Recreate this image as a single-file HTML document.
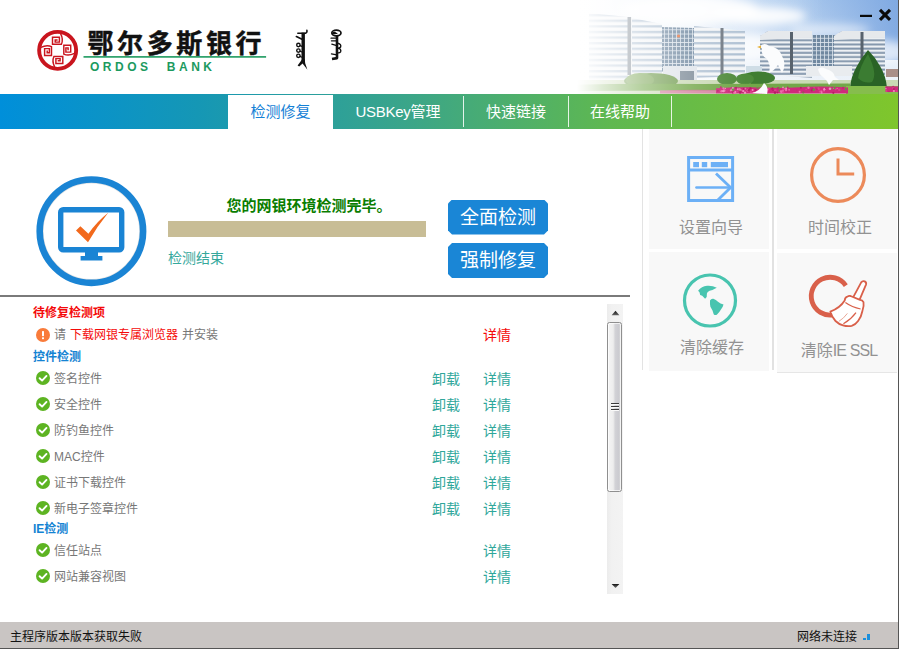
<!DOCTYPE html>
<html lang="zh-CN">
<head>
<meta charset="utf-8">
<title>鄂尔多斯银行网银助手</title>
<style>
*{box-sizing:border-box;margin:0;padding:0}
html,body{width:900px;height:650px;overflow:hidden;background:#fff}
body{font-family:"Liberation Sans","Noto Sans CJK SC",sans-serif;position:relative;color:#333}
.abs{position:absolute}
#win{position:absolute;left:0;top:0;width:899px;height:649px;background:#fff;border-right:1px solid #555;border-bottom:1px solid #555;overflow:hidden}
/* header */
#header{position:absolute;left:0;top:0;width:898px;height:94px;background:#fff;overflow:hidden}
#photo{position:absolute;left:560px;top:0;width:338px;height:94px}
#logo{position:absolute;left:30px;top:20px;width:340px;height:60px}
.ordos{position:absolute;left:90px;top:59px;font-size:12px;font-weight:bold;color:#1c9a5f;letter-spacing:3.5px;word-spacing:8.5px;white-space:pre;line-height:16px}
#winbtns{position:absolute;left:856px;top:6px;width:40px;height:20px}
/* nav */
#nav{position:absolute;left:0;top:94px;width:898px;height:35px;background:linear-gradient(90deg,#008fda 0%,#1597b5 22%,#3aa58a 45%,#5fb850 68%,#7fc62c 100%)}
.tab{position:absolute;top:1px;height:34px;line-height:33px;text-align:center;color:#fff;font-size:15px;white-space:nowrap}
.tab.active{background:#fff;color:#1481d6}
.sep{position:absolute;top:2px;width:1px;height:31px;background:rgba(255,255,255,.85)}
/* detect area */
#msg{position:absolute;left:168px;top:197px;width:282px;text-align:center;font-size:15px;font-weight:bold;color:#0a7d00;line-height:18px;white-space:nowrap}
#bar{position:absolute;left:168px;top:221px;width:258px;height:16px;background:#c8bd96}
#end{position:absolute;left:168px;top:249px;font-size:14px;color:#35a89c;line-height:18px}
.bigbtn{position:absolute;left:448px;width:100px;height:35px;background:#1a86d6;color:#fff;font-size:19px;line-height:34px;padding-top:1px;text-align:center;white-space:nowrap;clip-path:polygon(4px 0,96px 0,100px 4px,100px 31px,96px 35px,4px 35px,0 31px,0 4px)}
#hr{position:absolute;left:0;top:295px;width:630px;height:2px;background:#7a7a7a}
/* list */
#list{position:absolute;left:33px;top:304px;width:570px;height:292px;font-size:12px;line-height:18px}
.row{position:absolute;left:0;width:570px;height:18px;white-space:nowrap}
.h-red{color:#f40a0a;font-weight:bold}
.h-blue{color:#1483d3;font-weight:bold}
.name{position:absolute;left:21px;top:0;color:#777;word-spacing:.7px}
.ico{position:absolute;left:3px;top:1px;width:14px;height:14px}
.un{position:absolute;left:399px;top:0;color:#2fa79b;font-size:14px}
.dt{position:absolute;left:450px;top:0;color:#2fa79b;font-size:14px}
.red{color:#f40a0a}
/* scrollbar */
#sb{position:absolute;left:607px;top:304px;width:16px;height:290px;background:linear-gradient(90deg,#ececec 0%,#f1f1f1 30%,#f3f3f3 100%)}
#thumb{position:absolute;left:0;top:18px;width:15px;height:170px;border:1px solid #8f8f8f;border-radius:2.5px;background:linear-gradient(90deg,#f5f5f5 0%,#ededed 40%,#d2d2d6 55%,#cbcbd0 80%,#dadada 100%);box-shadow:inset 0 0 0 1px rgba(255,255,255,.7)}
#thumb i{position:absolute;left:3px;width:8px;height:2px;background:linear-gradient(180deg,#3a3a3a 0,#3a3a3a 50%,#fafafa 50%,#fafafa 100%)}
/* tiles */
#tiles{position:absolute;left:0;top:0;width:898px;height:400px}
.tile{position:absolute;background:#f8f8f8}
.tl{position:absolute;left:0;width:100%;text-align:center;font-size:16px;color:#929292;white-space:nowrap;line-height:20px}
/* status */
#status{position:absolute;left:0;top:622px;width:898px;height:26px;background:#c9c5c3;font-size:12px;color:#111;line-height:26px}
</style>
</head>
<body>
<div id="win">
  <div id="header">
    <svg id="photo" viewBox="560 0 338 94" preserveAspectRatio="none">
      <defs>
        <linearGradient id="sky" x1="0" y1="0" x2="0" y2="1">
          <stop offset="0" stop-color="#b4d0f0"/><stop offset="0.45" stop-color="#d3e3f5"/><stop offset="0.8" stop-color="#eaf1f9"/><stop offset="1" stop-color="#f2f5f8"/>
        </linearGradient>
        <linearGradient id="skyR" x1="0" y1="0" x2="1" y2="0">
          <stop offset="0" stop-color="#7fa8e2" stop-opacity="0"/><stop offset="0.7" stop-color="#7aa5e0" stop-opacity="0.18"/><stop offset="1" stop-color="#7aa5e0" stop-opacity="0.9"/>
        </linearGradient>
        <linearGradient id="skyL" x1="0" y1="0" x2="1" y2="0"><stop offset="0" stop-color="#fff" stop-opacity="1"/><stop offset="0.4" stop-color="#fff" stop-opacity="0.75"/><stop offset="0.62" stop-color="#fff" stop-opacity="0.25"/><stop offset="0.78" stop-color="#fff" stop-opacity="0"/></linearGradient>
        <linearGradient id="fade" x1="0" y1="0" x2="1" y2="0">
          <stop offset="0" stop-color="#fff" stop-opacity="1"/><stop offset="0.05" stop-color="#fff" stop-opacity="1"/><stop offset="0.13" stop-color="#fff" stop-opacity="0.76"/><stop offset="0.25" stop-color="#fff" stop-opacity="0.46"/><stop offset="0.4" stop-color="#fff" stop-opacity="0.18"/><stop offset="0.55" stop-color="#fff" stop-opacity="0"/>
        </linearGradient>
        <pattern id="fl1" x="0" y="0" width="8" height="5.6" patternUnits="userSpaceOnUse">
          <rect width="8" height="5.6" fill="#f3f5f7"/><rect y="2.9" width="8" height="2.2" fill="#adbfd2"/>
        </pattern>
        <pattern id="fl2" x="0" y="33" width="8" height="4.2" patternUnits="userSpaceOnUse">
          <rect width="8" height="4.2" fill="#eef1f4"/><rect y="2.1" width="8" height="1.9" fill="#8094aa"/>
        </pattern>
        <pattern id="gl" x="0" y="0" width="4" height="4.2" patternUnits="userSpaceOnUse">
          <rect width="4" height="4.2" fill="#6f88a0"/><rect x="0" y="0" width="0.8" height="4.2" fill="#dfe6ee"/><rect x="0" y="0" width="4" height="0.8" fill="#dfe6ee"/>
        </pattern>
        <filter id="b1" x="-20%" y="-20%" width="140%" height="140%"><feGaussianBlur stdDeviation="0.5"/></filter>
        <filter id="b3" x="-30%" y="-30%" width="160%" height="160%"><feGaussianBlur stdDeviation="4"/></filter>
        <filter id="b2" x="-30%" y="-30%" width="160%" height="160%"><feGaussianBlur stdDeviation="1.2"/></filter>
      </defs>
      <rect x="560" y="0" width="338" height="94" fill="url(#sky)"/>
      <rect x="560" y="0" width="338" height="60" fill="url(#skyR)"/>
      <rect x="560" y="0" width="338" height="94" fill="url(#skyL)"/>
      <g filter="url(#b3)" fill="#fff">
        <ellipse cx="760" cy="16" rx="46" ry="9" opacity=".9"/>
        <ellipse cx="690" cy="10" rx="70" ry="14" opacity=".9"/>
        <ellipse cx="830" cy="30" rx="40" ry="6" opacity=".55"/>
        <ellipse cx="880" cy="52" rx="30" ry="12" opacity=".7"/>
        <ellipse cx="750" cy="48" rx="30" ry="14" opacity=".8"/>
      </g>
      <!-- building 1 -->
      <g filter="url(#b1)">
        <polygon points="589,13 628,17 628,84 589,84" fill="url(#fl1)"/>
        <polygon points="632,18 662,24 662,78 632,80" fill="url(#fl1)"/>
        <rect x="627.5" y="17" width="3.6" height="58" fill="#7d8791"/>
        <polygon points="662,27 694,28 694,70 662,72" fill="url(#gl)"/>
        <polygon points="694,26 745,31 745,76 694,78" fill="url(#fl1)"/>
        <rect x="720.5" y="28" width="3" height="47" fill="#6f7882"/>
        <rect x="663" y="66" width="34" height="16" fill="#dfe4ea"/>
        <rect x="680" y="71" width="14" height="9" fill="#7c8a97"/>
        <circle cx="678.5" cy="36" r="1.6" fill="#e8703a"/>
        <!-- building 2 -->
        <polygon points="760,36 768,31 812,31 812,78 760,74" fill="url(#fl2)"/>
        <polygon points="760,36 768,31 812,31 812,37 760,40" fill="#e6e9ec"/>
        <rect x="812" y="35" width="28" height="36" fill="url(#gl)"/>
        <polygon points="834,36 842,31 885,31 885,76 834,74" fill="url(#fl2)"/>
        <polygon points="834,36 842,31 885,31 885,37 834,40" fill="#e6e9ec"/>
        <rect x="790" y="32" width="3" height="42" fill="#59636e"/>
        <rect x="860.5" y="32" width="3" height="42" fill="#59636e"/>
        <rect x="806" y="66" width="46" height="10" fill="#e9ecef"/>
        <rect x="746" y="66" width="16" height="9" fill="#cfdde6"/>
        <rect x="886" y="69" width="12" height="8" fill="#a98f88"/>
      </g>
      <!-- ground, hedge, trees, flowers -->
      <g filter="url(#b1)">
        <rect x="560" y="80" width="338" height="14" fill="#c9d9b4"/>
        <ellipse cx="651" cy="81" rx="27" ry="8" fill="#6e9a4c"/>
        <ellipse cx="640" cy="80" rx="14" ry="7" fill="#7ba656"/>
        <ellipse cx="727" cy="79" rx="10" ry="6" fill="#4f8a3b"/>
        <ellipse cx="758" cy="78" rx="17" ry="6.5" fill="#3f7d30"/>
        <ellipse cx="745" cy="79" rx="9" ry="5.5" fill="#4d8a3a"/>
        <path d="M868 50 Q861 58 857 66 Q851 76 850 88 L887 88 Q886 76 880 66 Q875 57 868 50 Z" fill="#2a6425"/>
        <path d="M868 54 Q860 66 858 78 Q864 84 872 82 Q878 74 868 54 Z" fill="#3a7c31"/>
        <path d="M560 85 Q640 83 700 84 L850 83.5 L850 90 L560 91 Z" fill="#73a748"/>
        <rect x="846" y="86" width="52" height="8" fill="#86bd4e"/>
        <path d="M716 88.2 Q740 86.6 760 87.6 T800 87.2 T848 87.4 V93.6 H716 Z" fill="#cf2c7c"/>
        <path d="M885.5 86.4 H898 V92 H885.5 Z" fill="#cf2c7c"/>
        <path d="M660 90.4 Q690 89.4 716 90 V93.6 H660 Z" fill="#d85a96" opacity=".7"/>
        <circle cx="758.7" cy="88.1" r="0.6" fill="#5f9a3e"/><circle cx="824.4" cy="87.7" r="0.6" fill="#c22672"/><circle cx="783.0" cy="87.4" r="0.9" fill="#f08dc0"/><circle cx="747.8" cy="90.4" r="1.2" fill="#ee6aab"/><circle cx="732.3" cy="88.5" r="1.0" fill="#5f9a3e"/><circle cx="724.2" cy="90.6" r="1.3" fill="#ee6aab"/><circle cx="722.1" cy="92.2" r="0.9" fill="#b51f66"/><circle cx="787.4" cy="90.5" r="1.2" fill="#c22672"/><circle cx="739.9" cy="90.6" r="0.7" fill="#5f9a3e"/><circle cx="728.9" cy="91.3" r="0.6" fill="#c22672"/><circle cx="743.2" cy="91.1" r="1.1" fill="#f08dc0"/><circle cx="777.5" cy="92.6" r="0.8" fill="#b51f66"/><circle cx="820.9" cy="91.3" r="0.7" fill="#e0408f"/><circle cx="755.6" cy="90.1" r="1.1" fill="#b51f66"/><circle cx="754.0" cy="92.9" r="1.0" fill="#ee6aab"/><circle cx="737.8" cy="89.2" r="0.9" fill="#f08dc0"/><circle cx="843.0" cy="87.7" r="1.0" fill="#c22672"/><circle cx="831.6" cy="89.0" r="0.8" fill="#5f9a3e"/><circle cx="781.6" cy="91.8" r="1.2" fill="#ee6aab"/><circle cx="840.7" cy="89.9" r="0.6" fill="#5f9a3e"/><circle cx="812.5" cy="89.0" r="1.3" fill="#c22672"/><circle cx="824.5" cy="88.9" r="1.2" fill="#f08dc0"/><circle cx="761.8" cy="92.7" r="0.7" fill="#b51f66"/><circle cx="731.5" cy="87.5" r="0.7" fill="#b51f66"/><circle cx="748.7" cy="89.5" r="0.7" fill="#f08dc0"/><circle cx="775.3" cy="90.4" r="1.2" fill="#e0408f"/><circle cx="830.0" cy="88.8" r="1.3" fill="#f08dc0"/><circle cx="806.1" cy="89.4" r="0.7" fill="#e0408f"/><circle cx="739.3" cy="88.5" r="0.6" fill="#e0408f"/><circle cx="825.7" cy="88.3" r="0.6" fill="#b51f66"/><circle cx="771.3" cy="89.3" r="0.8" fill="#c22672"/><circle cx="732.6" cy="92.2" r="1.1" fill="#c22672"/><circle cx="813.7" cy="89.8" r="1.2" fill="#5f9a3e"/><circle cx="767.8" cy="89.5" r="0.9" fill="#ee6aab"/><circle cx="768.9" cy="88.3" r="0.9" fill="#e0408f"/><circle cx="730.5" cy="90.7" r="0.6" fill="#ee6aab"/><circle cx="736.0" cy="87.8" r="1.0" fill="#b51f66"/><circle cx="725.3" cy="88.4" r="0.7" fill="#f08dc0"/><circle cx="749.3" cy="89.2" r="0.9" fill="#b51f66"/><circle cx="731.2" cy="90.0" r="0.9" fill="#f08dc0"/><circle cx="757.2" cy="88.0" r="0.8" fill="#5f9a3e"/><circle cx="750.9" cy="92.0" r="1.0" fill="#e0408f"/><circle cx="743.1" cy="92.7" r="0.7" fill="#b51f66"/><circle cx="787.7" cy="87.4" r="0.8" fill="#c22672"/><circle cx="800.9" cy="87.7" r="1.0" fill="#b51f66"/><circle cx="835.9" cy="89.3" r="1.0" fill="#e0408f"/><circle cx="818.8" cy="89.1" r="1.0" fill="#e0408f"/><circle cx="820.1" cy="91.6" r="1.2" fill="#e0408f"/><circle cx="824.0" cy="91.5" r="0.7" fill="#e0408f"/><circle cx="781.0" cy="91.4" r="1.2" fill="#ee6aab"/><circle cx="778.3" cy="88.3" r="1.3" fill="#c22672"/><circle cx="775.0" cy="92.6" r="1.3" fill="#b51f66"/><circle cx="764.1" cy="88.5" r="0.9" fill="#e0408f"/><circle cx="760.6" cy="90.0" r="1.2" fill="#c22672"/><circle cx="779.3" cy="91.0" r="0.7" fill="#5f9a3e"/><circle cx="803.2" cy="92.5" r="1.1" fill="#5f9a3e"/><circle cx="779.1" cy="88.2" r="0.8" fill="#5f9a3e"/><circle cx="821.7" cy="92.8" r="0.9" fill="#f08dc0"/><circle cx="814.1" cy="87.7" r="0.7" fill="#e0408f"/><circle cx="732.8" cy="88.1" r="1.2" fill="#f08dc0"/><circle cx="735.3" cy="92.0" r="1.1" fill="#f08dc0"/><circle cx="762.3" cy="90.4" r="0.6" fill="#e0408f"/><circle cx="821.5" cy="91.4" r="1.0" fill="#ee6aab"/><circle cx="839.2" cy="89.7" r="1.2" fill="#e0408f"/><circle cx="743.9" cy="88.7" r="1.0" fill="#b51f66"/><circle cx="816.8" cy="89.1" r="0.9" fill="#c22672"/><circle cx="733.3" cy="92.5" r="1.2" fill="#b51f66"/><circle cx="803.4" cy="91.9" r="0.9" fill="#c22672"/><circle cx="837.1" cy="90.1" r="0.7" fill="#c22672"/><circle cx="783.4" cy="92.3" r="1.0" fill="#e0408f"/><circle cx="818.4" cy="88.1" r="0.9" fill="#e0408f"/><circle cx="811.7" cy="90.4" r="1.1" fill="#b51f66"/><circle cx="786.1" cy="90.0" r="1.2" fill="#ee6aab"/><circle cx="723.5" cy="88.3" r="1.1" fill="#ee6aab"/><circle cx="783.0" cy="90.5" r="0.9" fill="#ee6aab"/><circle cx="796.9" cy="90.1" r="0.7" fill="#c22672"/><circle cx="752.6" cy="90.1" r="1.0" fill="#f08dc0"/><circle cx="748.7" cy="90.2" r="1.2" fill="#b51f66"/><circle cx="833.8" cy="88.4" r="0.7" fill="#f08dc0"/><circle cx="732.1" cy="89.8" r="1.1" fill="#ee6aab"/><circle cx="772.5" cy="88.4" r="1.1" fill="#b51f66"/><circle cx="834.4" cy="88.1" r="1.1" fill="#5f9a3e"/><circle cx="764.3" cy="88.7" r="1.3" fill="#e0408f"/><circle cx="745.0" cy="92.7" r="1.2" fill="#f08dc0"/><circle cx="737.5" cy="91.1" r="0.7" fill="#e0408f"/><circle cx="773.0" cy="90.2" r="0.9" fill="#b51f66"/><circle cx="763.1" cy="87.7" r="0.6" fill="#b51f66"/><circle cx="789.1" cy="89.8" r="0.9" fill="#ee6aab"/><circle cx="784.3" cy="88.9" r="0.7" fill="#ee6aab"/><circle cx="837.2" cy="88.5" r="0.7" fill="#ee6aab"/><circle cx="751.9" cy="92.5" r="0.8" fill="#e0408f"/><circle cx="733.1" cy="89.6" r="1.2" fill="#5f9a3e"/><circle cx="750.1" cy="88.1" r="1.0" fill="#c22672"/><circle cx="808.5" cy="87.7" r="1.2" fill="#ee6aab"/><circle cx="740.2" cy="92.4" r="1.3" fill="#b51f66"/><circle cx="799.7" cy="91.8" r="1.0" fill="#ee6aab"/><circle cx="745.4" cy="88.7" r="0.9" fill="#ee6aab"/><circle cx="760.8" cy="90.4" r="1.0" fill="#b51f66"/><circle cx="721.7" cy="91.3" r="1.3" fill="#ee6aab"/><circle cx="750.6" cy="88.3" r="1.0" fill="#b51f66"/><circle cx="786.1" cy="88.4" r="1.0" fill="#f08dc0"/><circle cx="739.5" cy="89.2" r="1.3" fill="#ee6aab"/><circle cx="720.9" cy="87.3" r="1.0" fill="#c22672"/><circle cx="741.0" cy="90.0" r="0.7" fill="#f08dc0"/><circle cx="824.1" cy="89.7" r="1.0" fill="#f08dc0"/><circle cx="833.3" cy="92.8" r="1.1" fill="#b51f66"/><circle cx="845.7" cy="89.2" r="1.1" fill="#5f9a3e"/><circle cx="734.4" cy="92.9" r="1.2" fill="#ee6aab"/><circle cx="717.9" cy="90.8" r="0.9" fill="#b51f66"/><circle cx="723.3" cy="91.1" r="1.2" fill="#f08dc0"/><circle cx="893.4" cy="88.0" r="1.0" fill="#e0408f"/><circle cx="886.5" cy="87.5" r="0.9" fill="#b51f66"/><circle cx="888.9" cy="91.4" r="0.8" fill="#c22672"/><circle cx="886.4" cy="91.0" r="0.8" fill="#e0408f"/><circle cx="886.0" cy="88.5" r="0.8" fill="#f08dc0"/><circle cx="893.2" cy="87.8" r="0.7" fill="#ee6aab"/><circle cx="895.0" cy="87.3" r="0.6" fill="#c22672"/><circle cx="886.2" cy="88.1" r="0.7" fill="#e0408f"/><circle cx="896.5" cy="90.9" r="1.0" fill="#e0408f"/><circle cx="893.9" cy="91.0" r="1.1" fill="#f08dc0"/><circle cx="893.9" cy="89.1" r="1.0" fill="#b51f66"/><circle cx="893.1" cy="86.8" r="1.0" fill="#c22672"/>
      </g>
      <!-- doves -->
      <g filter="url(#b1)" fill="#fbfcfd">
        <path d="M760 46 q5 -4 9 0 q10 1 13 10 q5 8 0 17 l-4 -8 q-4 6 -9 8 q2 -8 -2 -14 q-6 -3 -5 -10 z"/>
        <polygon points="757,47 761,45.5 761,48.5" fill="#e7b23a"/>
        <path d="M818 69 q4 -3 8 0 q8 2 9 8 l4 3 l-6 0 l-4 5 q-2 -5 -6 -8 q-4 -3 -5 -8 z"/>
        <path d="M752 93 q8 -2 12 -10 q5 4 3 11 z"/>
      </g>
      <rect x="560" y="0" width="338" height="94" fill="url(#fade)"/>
    </svg>
    <svg id="logo" viewBox="30 20 340 60" role="img" aria-label="鄂尔多斯银行 ORDOS BANK">
      <circle cx="57.65" cy="50.35" r="18.5" fill="none" stroke="#c9151e" stroke-width="3.9"/>
      <g fill="none" stroke="#c9151e" stroke-width="1.45" stroke-linejoin="miter">
        <path id="sp" d="M60.6 33.6 Q63.6 39.4 61.4 44.2 H52.5 V37.3 H59.4 V42.1 H55.2 V39.9 H57.6"/>
        <use href="#sp" transform="rotate(90 57.65 50.35)"/>
        <use href="#sp" transform="rotate(180 57.65 50.35)"/>
        <use href="#sp" transform="rotate(270 57.65 50.35)"/>
      </g>
      <text x="87.5" y="52.6" font-family="&quot;Liberation Sans&quot;,&quot;Noto Sans CJK SC&quot;,sans-serif" font-size="26" font-weight="bold" fill="#111" stroke="#111" stroke-width="0.45" letter-spacing="3.6">鄂尔多斯银行</text>
      <rect x="83.5" y="56.1" width="182.6" height="1.6" fill="#1c9a5f"/>
      <g fill="#111" stroke="#111" stroke-linecap="round" stroke-linejoin="round">
        <rect x="301.5" y="32.6" width="3.4" height="29.2" stroke="none"/>
        <path d="M297.8 33.2 H305.6 Q307.4 32.6 306.9 30.2" fill="none" stroke-width="1.5"/>
        <path d="M296.4 36.6 L302 39.2" fill="none" stroke-width="1.7"/>
        <circle cx="298.4" cy="45" r="1.7" fill="none" stroke-width="1.4"/>
        <circle cx="298.4" cy="50.6" r="1.7" fill="none" stroke-width="1.4"/>
        <circle cx="298.4" cy="55.8" r="1.7" fill="none" stroke-width="1.4"/>
        <path d="M300 45.6 L302 46.4 M300 51.2 L302 52 M300 56.4 L302 57.2" fill="none" stroke-width="1.2"/>
        <path d="M302 59.5 L297.6 65.6 L299.2 66.6 L302.6 63.4 L307.4 69.8 L305.2 63.2 L304.8 59.5 Z" stroke="none"/>
        <g transform="translate(-1.2 -0.4)"><ellipse cx="337.6" cy="33.4" rx="4.6" ry="2.8" fill="none" stroke-width="1.7"/><ellipse cx="335.4" cy="33.4" rx="1.8" ry="1.3" stroke="none"/>
        <path d="M333.6 33.8 H338" fill="none" stroke-width="1.3"/>
        <path d="M338.2 36 V58.5 L333.2 59.4" fill="none" stroke-width="2.6" stroke-linecap="butt"/>
        <path d="M332.2 38.6 H338 M332.6 41.2 H338 M333 44.6 L338 46 M332.6 54.2 L338 55.2" fill="none" stroke-width="1.2"/>
        <path d="M339 43.6 Q342.8 44.6 341.8 47.4 Q340.8 48.8 338.8 48.4 M339 48.4 Q342.8 49.4 341.8 52.2 Q340.8 53.6 338.8 53.2" fill="none" stroke-width="1.4"/></g>
      </g>
    </svg>
    <div class="ordos">ORDOS BANK</div>
    <svg id="winbtns" viewBox="0 0 40 20">
      <rect x="4" y="8.8" width="12" height="2.2" fill="#0a0a0a"/>
      <path d="M24 3.9 L34 13.9 M34 3.9 L24 13.9" stroke="#0a0a0a" stroke-width="3.1" fill="none"/>
    </svg>
  </div>
  <div id="nav">
    <div class="tab active" style="left:228px;width:105px">检测修复</div>
    <div class="tab" style="left:333px;width:130px"><span style="letter-spacing:-0.3px">USBKey</span>管理</div>
    <div class="sep" style="left:463px"></div>
    <div class="tab" style="left:464px;width:104px">快速链接</div>
    <div class="sep" style="left:568px"></div>
    <div class="tab" style="left:569px;width:102px">在线帮助</div>
    <div class="sep" style="left:671px"></div>
  </div>

  <svg class="abs" id="monitor" style="left:30px;top:170px;width:124px;height:124px" viewBox="30 170 124 124">
    <circle cx="91.4" cy="231.2" r="48.6" fill="#fff" stroke="#e3e3e3" stroke-width="1.6"/>
    <circle cx="91.4" cy="231.2" r="51.7" fill="none" stroke="#1a84d4" stroke-width="6.6"/>
    <rect x="60.7" y="209.7" width="61" height="40" rx="2.5" fill="#fff" stroke="#1a84d4" stroke-width="5.4"/>
    <path d="M85 252 H98 V256 H102.4 V260.4 H80.6 V256 H85 Z" fill="#1a84d4"/>
    <path d="M80.4 226.2 L88.4 233.8 Q97 221.5 108.2 212.8 Q97.5 226 88 242.2 L76 230.6 Z" fill="#f2691c"/>
  </svg>
  <div id="msg">您的网银环境检测完毕。</div>
  <div id="bar"></div>
  <div id="end">检测结束</div>
  <div class="bigbtn" style="top:199.5px">全面检测</div>
  <div class="bigbtn" style="top:243px">强制修复</div>
  <div id="hr"></div>

  <div id="list">
    <div class="row h-red" style="top:0px">待修复检测项</div>
    <div class="row" style="top:22px"><svg class="ico" style="top:2px" viewBox="0 0 14 14"><circle cx="7" cy="7" r="7" fill="#f97b3a"/><rect x="6" y="3" width="2" height="5.2" rx="0.6" fill="#fff"/><rect x="6" y="9.2" width="2" height="2" rx="0.6" fill="#fff"/></svg><span class="name">请 <span class="red">下载网银专属浏览器</span> 并安装</span><span class="dt red">详情</span></div>
    <div class="row h-blue" style="top:44px">控件检测</div>
    <div class="row" style="top:66px"><svg class="ico" viewBox="0 0 14 14"><circle cx="7" cy="7" r="7" fill="#5db422"/><path d="M3.6 7.2 L6.1 9.6 L10.5 4.9" fill="none" stroke="#fff" stroke-width="1.9" stroke-linecap="round" stroke-linejoin="round"/></svg><span class="name">签名控件</span><span class="un">卸载</span><span class="dt">详情</span></div>
    <div class="row" style="top:92px"><svg class="ico" viewBox="0 0 14 14"><circle cx="7" cy="7" r="7" fill="#5db422"/><path d="M3.6 7.2 L6.1 9.6 L10.5 4.9" fill="none" stroke="#fff" stroke-width="1.9" stroke-linecap="round" stroke-linejoin="round"/></svg><span class="name">安全控件</span><span class="un">卸载</span><span class="dt">详情</span></div>
    <div class="row" style="top:118px"><svg class="ico" viewBox="0 0 14 14"><circle cx="7" cy="7" r="7" fill="#5db422"/><path d="M3.6 7.2 L6.1 9.6 L10.5 4.9" fill="none" stroke="#fff" stroke-width="1.9" stroke-linecap="round" stroke-linejoin="round"/></svg><span class="name">防钓鱼控件</span><span class="un">卸载</span><span class="dt">详情</span></div>
    <div class="row" style="top:144px"><svg class="ico" viewBox="0 0 14 14"><circle cx="7" cy="7" r="7" fill="#5db422"/><path d="M3.6 7.2 L6.1 9.6 L10.5 4.9" fill="none" stroke="#fff" stroke-width="1.9" stroke-linecap="round" stroke-linejoin="round"/></svg><span class="name">MAC控件</span><span class="un">卸载</span><span class="dt">详情</span></div>
    <div class="row" style="top:170px"><svg class="ico" viewBox="0 0 14 14"><circle cx="7" cy="7" r="7" fill="#5db422"/><path d="M3.6 7.2 L6.1 9.6 L10.5 4.9" fill="none" stroke="#fff" stroke-width="1.9" stroke-linecap="round" stroke-linejoin="round"/></svg><span class="name">证书下载控件</span><span class="un">卸载</span><span class="dt">详情</span></div>
    <div class="row" style="top:196px"><svg class="ico" viewBox="0 0 14 14"><circle cx="7" cy="7" r="7" fill="#5db422"/><path d="M3.6 7.2 L6.1 9.6 L10.5 4.9" fill="none" stroke="#fff" stroke-width="1.9" stroke-linecap="round" stroke-linejoin="round"/></svg><span class="name">新电子签章控件</span><span class="un">卸载</span><span class="dt">详情</span></div>
    <div class="row h-blue" style="top:216px">IE检测</div>
    <div class="row" style="top:238px"><svg class="ico" viewBox="0 0 14 14"><circle cx="7" cy="7" r="7" fill="#5db422"/><path d="M3.6 7.2 L6.1 9.6 L10.5 4.9" fill="none" stroke="#fff" stroke-width="1.9" stroke-linecap="round" stroke-linejoin="round"/></svg><span class="name">信任站点</span><span class="dt">详情</span></div>
    <div class="row" style="top:264px"><svg class="ico" viewBox="0 0 14 14"><circle cx="7" cy="7" r="7" fill="#5db422"/><path d="M3.6 7.2 L6.1 9.6 L10.5 4.9" fill="none" stroke="#fff" stroke-width="1.9" stroke-linecap="round" stroke-linejoin="round"/></svg><span class="name">网站兼容视图</span><span class="dt">详情</span></div>
  </div>
  <div id="sb">
    <svg class="abs" style="left:0;top:0;width:16px;height:290px" viewBox="607 304 16 290">
      <defs><linearGradient id="ag" x1="0" y1="0" x2="0" y2="1"><stop offset="0" stop-color="#111"/><stop offset="1" stop-color="#666"/></linearGradient>
      <linearGradient id="ag2" x1="0" y1="0" x2="0" y2="1"><stop offset="0" stop-color="#111"/><stop offset="1" stop-color="#777"/></linearGradient></defs>
      <polygon points="611.6,315.2 619.4,315.2 615.5,310.7" fill="url(#ag)"/>
      <polygon points="611.6,584 619.4,584 615.5,588" fill="url(#ag2)"/>
    </svg>
    <div id="thumb"><i style="top:80px"></i><i style="top:83px"></i><i style="top:86px"></i></div>
  </div>

  <div id="tiles">
    <div class="abs" style="left:642px;top:129px;width:1px;height:241px;background:#e3e3e3"></div>
    <div class="abs" style="left:772px;top:129px;width:2px;height:241px;background:#e2e2e2"></div>
    <div class="abs" style="left:777px;top:372px;width:120px;height:1px;background:#e6e6e6"></div>
    <div class="tile" style="left:649px;top:129px;width:120px;height:120px">
      <svg class="abs" style="left:0;top:0;width:120px;height:120px" viewBox="649 129 120 120">
        <g fill="none" stroke="#6cb0f6">
          <rect x="688.6" y="157.5" width="44" height="43" stroke-width="3"/>
          <path d="M688.6 170 H732.6" stroke-width="3"/>
          <path d="M696.4 187.5 H730" stroke-width="2.4" stroke-linecap="round"/>
          <path d="M716 173.5 L730.6 187.5 L717.4 200.6" stroke-width="2.8"/>
        </g>
        <g fill="#6cb0f6"><rect x="693.2" y="162" width="5.8" height="5.2"/><rect x="701.8" y="162" width="5.4" height="5.2"/><rect x="710.8" y="162" width="17.2" height="5.2"/></g>
      </svg>
      <div class="tl" style="top:88.5px;left:2px">设置向导</div>
    </div>
    <div class="tile" style="left:777px;top:129px;width:120px;height:120px">
      <svg class="abs" style="left:0;top:0;width:120px;height:120px" viewBox="777 129 120 120">
        <circle cx="838" cy="175" r="26.4" fill="none" stroke="#ec8a5a" stroke-width="3.2"/>
        <path d="M838 158.4 V174 H854.2" fill="none" stroke="#ec8a5a" stroke-width="3"/>
      </svg>
      <div class="tl" style="top:88.5px;left:3px">时间校正</div>
    </div>
    <div class="tile" style="left:649px;top:252px;width:120px;height:119px">
      <svg class="abs" style="left:0;top:0;width:120px;height:120px" viewBox="649 252 120 120">
        <circle cx="710" cy="300.5" r="25.5" fill="none" stroke="#48c4af" stroke-width="3.2"/>
        <path fill="#48c4af" d="M698.1 290.8 Q701.5 286.4 707 285.8 Q712.5 285.4 716.8 287.7 Q714 289 712.5 290.1 L709.6 290.8 Q707.2 292 706.9 293.4 L706.7 296.9 L705.1 298.8 L702.2 295.7 L700.2 295.1 L699.5 292.2 Z"/>
        <path fill="#48c4af" d="M710 300.4 Q711.2 298.4 713.4 298.8 Q716 299.8 718 301.8 Q720.4 304 723.5 304.5 Q723 307 721.1 309.2 Q719.4 312.4 716.8 314.8 Q714.8 315.6 713.7 314.2 L712.5 310.5 L710.4 306.8 Q709.8 303.5 710 300.4 Z"/>
      </svg>
      <div class="tl" style="top:85.5px;left:3px">清除缓存</div>
    </div>
    <div class="tile" style="left:777px;top:253px;width:120px;height:119px">
      <svg class="abs" style="left:0;top:0;width:120px;height:119px" viewBox="777 253 120 119">
        <path d="M845.8 285.6 A18.9 18.9 0 1 0 833.4 314.8" fill="none" stroke="#d9604a" stroke-width="4.8"/>
        <path d="M853 297.6 L861.2 282.4 Q862.6 280.5 864.7 281.4 Q866.7 282.5 866 284.6 L859.2 300.6 Z" fill="#fff" stroke="#d9604a" stroke-width="1.8" stroke-linejoin="round"/>
        <path d="M847.4 296.6 Q845 297 844.7 300.5 Q840 308 830.3 311.6 Q832 317.5 835.5 321 Q839 324.4 843 325.3 Q847.5 326.6 851.7 325.8 Q855.6 324.6 858.1 321 Q861.4 316.6 862.4 311 Q864.2 306 863.5 302.1 Q862.4 300 860 299.8 L850.5 296 Q848.6 295.6 847.4 296.6 Z" fill="#fff" stroke="#d9604a" stroke-width="1.8" stroke-linejoin="round"/>
        <path d="M845.4 302.6 Q852 307.4 860.6 309 M856 312.6 Q851 319.4 843.4 323.8" fill="none" stroke="#d9604a" stroke-width="1.2"/>
        <path d="M847.4 313.4 Q843.8 318.4 838.8 321.4" fill="none" stroke="#e9a898" stroke-width="1"/>
      </svg>
      <div class="tl" style="top:88px;left:2px">清除<span style="letter-spacing:-.85px">IE SSL</span></div>
    </div>
  </div>

  <div id="status">
    <span class="abs" style="left:10px;top:1.5px">主程序版本版本获取失败</span>
    <span class="abs" style="left:797px;top:1.5px">网络未连接</span>
    <i class="abs" style="left:863px;top:15.5px;width:3px;height:2.5px;background:#1a8fdc"></i>
    <i class="abs" style="left:867px;top:12px;width:3px;height:6px;background:#1a8fdc"></i>
  </div>
</div>
</body>
</html>
